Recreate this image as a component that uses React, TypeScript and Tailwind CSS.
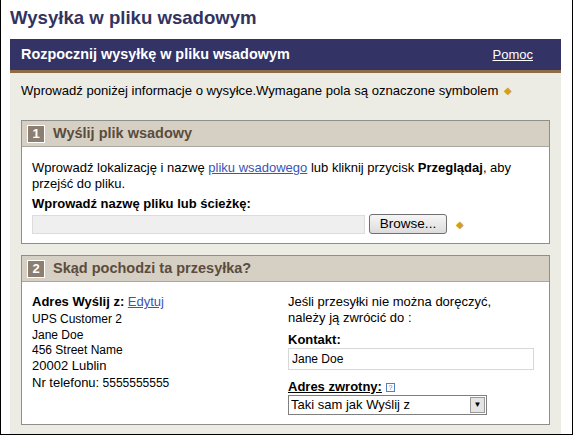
import React from 'react';

const font = { fontFamily: '"Liberation Sans", Arial, sans-serif' };

function Diamond() {
  return <span className="inline-block text-[10px] leading-none text-[#d4a017] align-middle">◆</span>;
}

function SectionHead({ num, title }: { num: string; title: string }) {
  return (
    <div className="flex h-[26px] items-center gap-[8px] border-b border-[#a8a8a0] bg-[#d6d0c4] pl-[5px]">
      <span className="flex h-[18px] w-[18px] items-center justify-center border border-white bg-[#8c7f72] text-[13px] font-bold leading-none text-white">
        {num}
      </span>
      <span className="text-[14.5px] font-bold text-[#5b4c3d]">{title}</span>
    </div>
  );
}

export default function App() {
  return (
    <div style={font} className="h-[435px] w-[573px] overflow-hidden border-x border-b border-black bg-white">
      <h1 className="pl-[9px] pt-[6px] text-[18.6px] font-bold leading-[24px] text-[#33335f]">Wysyłka w pliku wsadowym</h1>

      <div className="ml-[9px] mt-[9px] w-[551px]">
        <div className="flex h-[31px] items-center justify-between bg-[#333366] pl-[11px] pr-[28px]">
          <span className="text-[14.4px] font-bold text-white">Rozpocznij wysyłkę w pliku wsadowym</span>
          <span className="text-[13px] text-white underline">Pomoc</span>
        </div>
        <div className="h-[3px] bg-[#8d6a48]" />

        <div className="h-[400px] bg-[#ecebe4] px-[11px] pt-[9px]">
          <p className="flex items-center gap-[6px] text-[13.1px] leading-[18px] text-black">
            Wprowadź poniżej informacje o wysyłce.Wymagane pola są oznaczone symbolem <Diamond />
          </p>

          <div className="mt-[20px] border border-[#8e8e8a] bg-white">
            <SectionHead num="1" title="Wyślij plik wsadowy" />
            <div className="px-[10px] pb-[9px] pt-[13px] text-[13px] leading-[16px] text-black">
              <p>
                Wprowadź lokalizację i nazwę <span className="text-[#3b54b8] underline">pliku wsadowego</span> lub kliknij przycisk{' '}
                <b>Przeglądaj</b>, aby przejść do pliku.
              </p>
              <p className="mt-[4px] font-bold">Wprowadź nazwę pliku lub ścieżkę:</p>
              <div className="mt-[2px] flex items-center">
                <div className="h-[19px] w-[333px] border border-[#dcdcdc] bg-[#efefef]" />
                <div className="ml-[4px] flex h-[20px] w-[78px] items-center justify-center rounded-[3px] border border-[#707070] bg-gradient-to-b from-[#f6f6f6] to-[#dcdcdc] text-[13.5px]">
                  Browse...
                </div>
                <span className="ml-[9px]"><Diamond /></span>
              </div>
            </div>
          </div>

          <div className="mt-[11px] border border-[#8e8e8a] bg-white">
            <SectionHead num="2" title="Skąd pochodzi ta przesyłka?" />
            <div className="flex px-[10px] pb-[9px] pt-[12px] text-black">
              <div className="w-[256px]">
                <p className="text-[13px] leading-[16px]">
                  <b>Adres Wyślij z:</b> <span className="text-[#3b54b8] underline">Edytuj</span>
                </p>
                <div className="text-[12px] leading-[16px]">
                  <p className="mt-[1px]">UPS Customer 2</p>
                  <p>Jane Doe</p>
                  <p className="-mt-[1px]">456 Street Name</p>
                  <p className="text-[13px]">20002 Lublin</p>
                  <p className="mt-[1px]"><span className="text-[13px]">Nr telefonu:</span> 5555555555</p>
                </div>
              </div>
              <div className="text-[13px] leading-[16px]">
                <p>Jeśli przesyłki nie można doręczyć,</p>
                <p>należy ją zwrócić do :</p>
                <p className="mt-[6px] font-bold">Kontakt:</p>
                <div className="flex h-[22px] w-[246px] items-center border border-[#d8d8d8] pl-[3px] text-[12px]">Jane Doe</div>
                <p className="mt-[9px] flex items-center gap-[4px]">
                  <span className="font-bold underline">Adres zwrotny:</span>
                  <span className="flex h-[9px] w-[9px] items-center justify-center border border-[#5b7bbf] text-[7px] leading-none text-[#5b7bbf]">?</span>
                </p>
                <div className="flex h-[20px] w-[199px] items-center justify-between border border-[#7f7f7f] pl-[2px]">
                  <span>Taki sam jak Wyślij z</span>
                  <span className="mr-[1px] flex h-[16px] w-[15px] items-center justify-center border border-[#9a9a9a] bg-[#e4e4e4] text-[8px]">▼</span>
                </div>
              </div>
            </div>
          </div>
        </div>
      </div>
    </div>
  );
}
